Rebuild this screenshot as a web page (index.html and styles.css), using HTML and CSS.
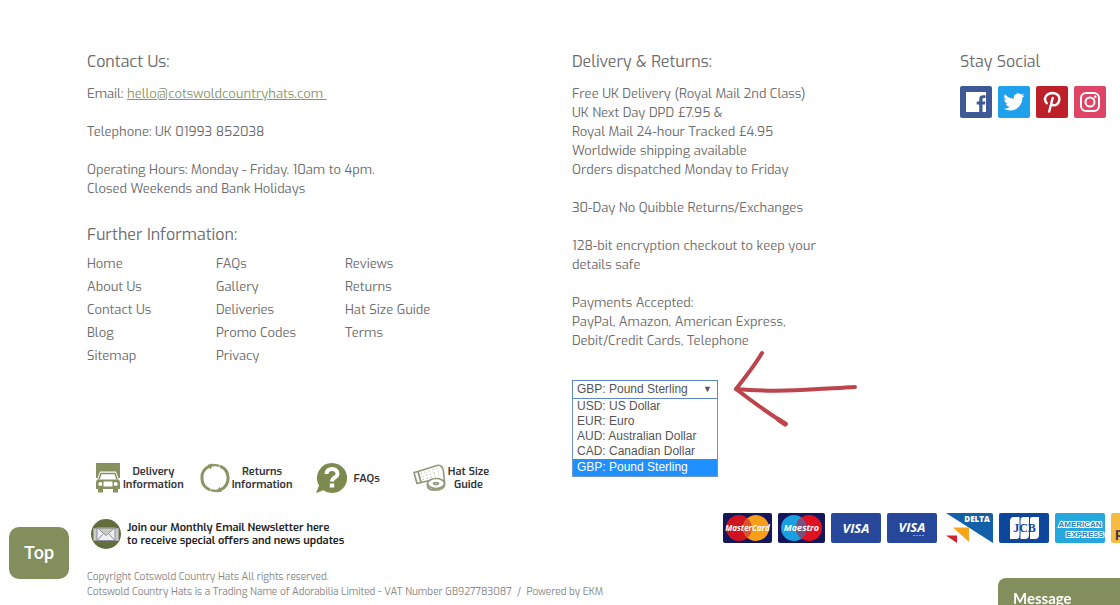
FILE: index.html
```html
<!DOCTYPE html>
<html lang="en">
<head>
<meta charset="utf-8">
<meta name="viewport" content="width=device-width, initial-scale=1">
<title>Cotswold Country Hats</title>
<link rel="stylesheet" href="styles.css">
</head>
<body>
<footer class="footer">
  <div class="columns">
    <div class="col">
      <section>
        <h2 class="heading">Contact Us:</h2>
        <p class="copy">Email: <a class="mail" href="mailto:hello@cotswoldcountryhats.com">hello@cotswoldcountryhats.com&nbsp;</a></p>
        <p class="copy">Telephone: UK 01993 852038</p>
        <p class="copy">Operating Hours: Monday - Friday. 10am to 4pm.<br>Closed Weekends and Bank Holidays</p>
      </section>
      <nav class="further" aria-labelledby="further-title">
        <h2 class="heading heading-tight" id="further-title">Further Information:</h2>
        <div class="links">
          <ul>
            <li><a href="#">Home</a></li>
            <li><a href="#">About Us</a></li>
            <li><a href="#">Contact Us</a></li>
            <li><a href="#">Blog</a></li>
            <li><a href="#">Sitemap</a></li>
          </ul>
          <ul>
            <li><a href="#">FAQs</a></li>
            <li><a href="#">Gallery</a></li>
            <li><a href="#">Deliveries</a></li>
            <li><a href="#">Promo Codes</a></li>
            <li><a href="#">Privacy</a></li>
          </ul>
          <ul>
            <li><a href="#">Reviews</a></li>
            <li><a href="#">Returns</a></li>
            <li><a href="#">Hat Size Guide</a></li>
            <li><a href="#">Terms</a></li>
          </ul>
        </div>
      </nav>
      <div class="shortcuts">
        <a class="shortcut" href="#">
          <svg width="26" height="32" viewBox="0 0 26 32" aria-hidden="true">
            <path fill="#86915f" d="M1 1h24v15h-1.500L21 9.500H5L2.500 16H1z"/>
            <path fill="none" stroke="#86915f" stroke-width="1.500" d="M3.800 17.500 6 11.500h14l2.200 6"/>
            <path fill="#86915f" d="M2 17.500h22l1 2.500v7h-2v3.500h-5V27H8v3.500H3V27H1v-7z"/>
            <circle cx="5.300" cy="22" r="2" fill="#fff"/><circle cx="20.700" cy="22" r="2" fill="#fff"/>
            <path fill="#fff" d="M8.500 19.500h9v5h-9z"/>
          </svg>
          <span>Delivery<br>Information</span>
        </a>
        <a class="shortcut" href="#">
          <svg width="30" height="32" viewBox="0 0 30 32" aria-hidden="true">
            <g fill="none" stroke="#8a9566" stroke-width="3"><path d="M9.500 4.200A12.800 12.800 0 0 0 10 27.800M20.500 27.800A12.800 12.800 0 0 0 20 4.200"/><path stroke-width="2.200" d="M10.500 4A12.800 12.800 0 0 1 19.500 4M10.500 28a12.800 12.800 0 0 0 9 0"/></g>
            <path fill="#8a9566" d="m8 2.500 5.500-1-3 6zM22 29.500l-5.500 1 3-6z"/>
          </svg>
          <span>Returns<br>Information</span>
        </a>
        <a class="shortcut shortcut-faq" href="#">
          <svg width="31" height="32" viewBox="0 0 31 32" aria-hidden="true">
            <path fill="#7c8a50" d="M16 1a15 15 0 1 1-8.500 27.300L0 31l3-7.500A15 15 0 0 1 16 1z"/>
            <path fill="none" stroke="#fff" stroke-width="4" d="M10.500 12c0-7 11.500-6.500 11 0 0 3.500-5.500 3.500-5.500 7.500"/><rect x="13.800" y="21.500" width="4.400" height="4" fill="#fff"/>
          </svg>
          <span>FAQs</span>
        </a>
        <a class="shortcut shortcut-size" href="#">
          <svg width="34" height="32" viewBox="0 0 34 32" aria-hidden="true">
            <g fill="#fff" stroke="#8d9878" stroke-width="1.600" stroke-linejoin="round">
              <path d="M6 9.500 25 3.500c4-1 6 2 6.500 6l1 11-6-4-17.500 4z"/>
              <path d="M2 10.500 6 9.500l3 11-4 1zM2 10.500 5 21.500"/>
              <ellipse cx="24" cy="21.500" rx="8.500" ry="5"/><path fill="none" d="M15.500 21.500v3c1 5 15 5 17-1v-3"/>
              <ellipse cx="24" cy="21.500" rx="2.500" ry="1"/>
            </g>
            <path fill="none" stroke="#a9b295" stroke-width="1.200" stroke-dasharray="1 3" d="m9 11.500 16-5M10.500 14.500l17-5M11 17.500l16-4.500"/>
          </svg>
          <span>Hat Size<br>Guide</span>
        </a>
      </div>
    </div>

    <div class="col">
      <h2 class="heading">Delivery &amp; Returns:</h2>
      <p class="copy">Free UK Delivery (Royal Mail 2nd Class)<br>UK Next Day DPD £7.95 &amp;<br>Royal Mail 24-hour Tracked £4.95<br>Worldwide shipping available<br>Orders dispatched Monday to Friday</p>
      <p class="copy">30-Day No Quibble Returns/Exchanges</p>
      <p class="copy">128-bit encryption checkout to keep your<br>details safe</p>
      <p class="copy">Payments Accepted:<br>PayPal, Amazon, American Express,<br>Debit/Credit Cards, Telephone</p>
      <div class="currency-row">
        <div class="currency">
          <select class="currency-select" aria-label="Currency">
            <option>USD: US Dollar</option>
            <option>EUR: Euro</option>
            <option>AUD: Australian Dollar</option>
            <option>CAD: Canadian Dollar</option>
            <option selected>GBP: Pound Sterling</option>
          </select>
          <span class="currency-caret" aria-hidden="true">▼</span>
          <ul class="currency-list" role="listbox" aria-label="Currencies">
            <li role="option">USD: US Dollar</li>
            <li role="option">EUR: Euro</li>
            <li role="option">AUD: Australian Dollar</li>
            <li role="option">CAD: Canadian Dollar</li>
            <li role="option" aria-selected="true" class="chosen">GBP: Pound Sterling</li>
          </ul>
        </div>
        <svg class="arrow" width="126" height="80" viewBox="0 0 126 80" aria-hidden="true">
          <g fill="none" stroke="#bd444d" stroke-width="4" stroke-linecap="round" stroke-linejoin="round"><path d="M123 38C85 40 48 44 4 40"/><path d="M30 4C21 19 11 31 4 40c13 10 30 23 50 35"/><path stroke-width="5" d="m47 71 6 4"/></g>
        </svg>
      </div>
    </div>

    <div class="col">
      <h2 class="heading">Stay Social</h2>
      <div class="social">
        <a href="#" aria-label="Facebook"><svg width="32" height="32" viewBox="0 0 32 32"><rect width="32" height="32" rx="2" fill="#3f5998"/><path fill="#fff" d="M6 6h20v20h-3.500v-7.500H25l.4-3h-2.900v-2c0-1 .5-1.500 1.500-1.500h1.500V9.200h-2.300c-2.700 0-4 1.500-4 4v2.300h-2.500v3h2.500V26H6z"/></svg></a>
        <a href="#" aria-label="Twitter"><svg width="32" height="32" viewBox="0 0 32 32"><rect width="32" height="32" rx="2" fill="#1fa1ee"/><path fill="#fff" transform="translate(5.500 5.500) scale(.875)" d="M23.950 4.570a10 10 0 0 1-2.820.77 4.960 4.960 0 0 0 2.160-2.720c-.95.550-2 .950-3.120 1.180a4.920 4.920 0 0 0-8.380 4.480C7.690 8.090 4.070 6.130 1.640 3.160a4.920 4.920 0 0 0 1.520 6.570 4.900 4.900 0 0 1-2.230-.61v.06a4.920 4.920 0 0 0 3.950 4.830 5 5 0 0 1-2.210.080 4.940 4.940 0 0 0 4.600 3.420A9.870 9.870 0 0 1 0 19.540a14 14 0 0 0 7.550 2.210c9.050 0 14-7.500 14-13.980l-.02-.64a9.940 9.940 0 0 0 2.420-2.560z"/></svg></a>
        <a href="#" aria-label="Pinterest"><svg width="32" height="32" viewBox="0 0 32 32"><rect width="32" height="32" rx="2" fill="#bd2029"/><path fill="none" stroke="#fff" stroke-width="2.400" stroke-linecap="round" d="M10.800 17.200C6.500 12 11 7 16.500 7c5 0 7.500 3.200 6.800 7.200-.8 4.600-5 6.500-8 4.100M16.700 12 13.200 25.500"/></svg></a>
        <a href="#" aria-label="Instagram"><svg width="32" height="32" viewBox="0 0 32 32"><rect width="32" height="32" rx="2" fill="#df4467"/><g fill="none" stroke="#fff" stroke-width="2"><rect x="7" y="7" width="18" height="18" rx="5"/><circle cx="16" cy="16" r="4.500"/></g><circle cx="21.300" cy="10.800" r="1.200" fill="#fff"/></svg></a>
      </div>
    </div>
  </div>

  <div class="bottom">
    <a class="newsletter" href="#">
      <svg width="32" height="32" viewBox="0 0 32 32" aria-hidden="true"><circle cx="16" cy="16" r="15" fill="#626f3c"/><path fill="#c9cbc5" stroke="#a2a59c" d="M3.500 10.500h25v12h-25z"/><path fill="#eeeff2" stroke="#8c8d9c" d="M7 9.500h18v13H7zM7 9.500l9 8 9-8M7 22.500l6.500-7M25 22.500l-6.500-7"/></svg>
      <span>Join our Monthly Email Newsletter here<br>to receive special offers and news updates</span>
    </a>
    <div class="payments">
      <svg width="49" height="30" viewBox="0 0 49 30" role="img" aria-label="MasterCard"><rect width="49" height="30" rx="2" fill="#15175c"/><circle cx="16" cy="15" r="13" fill="#d0141f"/><circle cx="33" cy="15" r="13" fill="#f79e1b"/><path fill="#d9542a" d="M24.500 5.200a13 13 0 0 1 0 19.600 13 13 0 0 1 0-19.600z"/><text class="card-master" x="24.500" y="18">MasterCard</text></svg>
      <svg width="47" height="30" viewBox="0 0 47 30" role="img" aria-label="Maestro"><rect width="47" height="30" rx="2" fill="#15175c"/><circle cx="16" cy="15" r="13" fill="#1a9fe0"/><circle cx="31" cy="15" r="13" fill="#e01222"/><path fill="#795181" d="M23.500 4.400a13 13 0 0 1 0 21.200 13 13 0 0 1 0-21.200z"/><text class="card-maestro" x="23.500" y="18">Maestro</text></svg>
      <svg width="50" height="30" viewBox="0 0 50 30" role="img" aria-label="Visa"><rect width="50" height="30" rx="2" fill="#26479a"/><text class="card-visa" x="25" y="20">VISA</text></svg>
      <svg width="50" height="30" viewBox="0 0 50 30" role="img" aria-label="Visa Debit"><rect width="50" height="30" rx="2" fill="#26479a"/><text class="card-visa" x="25" y="19">VISA</text><path stroke="#8fa2d4" stroke-dasharray="2 1" d="M26 22.500h12"/></svg>
      <svg width="50" height="30" viewBox="0 0 50 30" role="img" aria-label="Delta"><path fill="#1260a8" d="M3 0h45q2 0 2 2v28z"/><path fill="#f9a51a" d="M10 14.500h16V29z"/><path fill="#d7202d" d="M3 22.500h11V30z"/><text class="card-delta" x="34" y="9">DELTA</text></svg>
      <svg width="50" height="30" viewBox="0 0 50 30" role="img" aria-label="JCB"><rect width="50" height="30" rx="2" fill="#0d479b"/><path fill="#fff" d="M15 4h6v18q0 4-4 4h-6V8q0-4 4-4zM25 4h5v18q0 4-4 4h-5V8q0-4 4-4zM34 4h6v18q0 4-4 4h-6V8q0-4 4-4z"/><path stroke="#0d479b" d="M21 4v22M30.500 4v22"/><text class="card-jcb" x="25.500" y="19">JCB</text></svg>
      <svg width="50" height="30" viewBox="0 0 50 30" role="img" aria-label="American Express"><rect width="50" height="30" rx="2" fill="#25a8dc"/><g class="card-amex"><text x="25" y="14">AMERICAN</text><text x="30" y="24">EXPRESS</text></g></svg>
      <svg width="50" height="30" viewBox="0 0 50 30" role="img" aria-label="PayPal"><rect width="50" height="30" rx="2" fill="#f6bb42"/><text x="4" y="24" class="card-paypal">p</text></svg>
    </div>
  </div>

  <p class="legal">Copyright Cotswold Country Hats All rights reserved.<br>Cotswold Country Hats is a Trading Name of Adorabilia Limited - VAT Number GB927783087 &nbsp;/&nbsp; <a href="#">Powered by EKM</a></p>
</footer>
<button class="top-button" type="button">Top</button>
<button class="message-button" type="button">Message</button>
</body>
</html>
```

FILE: styles.css
```css
* { box-sizing: border-box; }
body {
  margin: 0;
  background: #fff;
  color: #6c6c6c;
  font: 13px/19px Exo, "Exo 2", Roboto, sans-serif;
  overflow: hidden;
}
h2, p, ul { margin: 0; padding: 0; }
ul { list-style: none; }
a { color: inherit; text-decoration: none; }
svg { display: block; flex: none; }

.footer { padding: 50px 0 0 87px; }
.columns { display: grid; grid-template-columns: 485fr 388fr 160fr; }
.heading { margin-bottom: 10px; font-size: 16px; line-height: 24px; font-weight: 400; }
.heading-tight { margin-bottom: 5px; }
.copy + .copy { margin-top: 19px; }
.mail { color: #899768; text-decoration: underline; }

.further { margin-top: 25px; }
.links { display: grid; grid-template-columns: repeat(3, 129px); line-height: 23px; }

.shortcuts { display: flex; align-items: center; margin-top: 95px; padding-left: 8px; gap: 16px; }
.shortcut { display: flex; align-items: center; gap: 2px; color: #333; font-size: 11px; line-height: 13px; font-weight: 600; text-align: center; }
.shortcut-faq { gap: 6px; margin-left: 8px; }
.shortcut-size { margin-left: 16px; }

.currency-row { display: flex; align-items: flex-start; margin-top: 30px; height: 20px; }
.currency { position: relative; width: 146px; font: 12px/15px "Liberation Sans", Arial, sans-serif; color: #555; }
.currency-select {
  display: block;
  width: 100%;
  height: 19px;
  padding: 0 4px;
  appearance: none;
  border: 1px solid #5b86c9;
  border-radius: 0;
  background: #fff;
  color: inherit;
  font: inherit;
}
.currency-caret { position: absolute; top: 2px; right: 6px; font-size: 9px; pointer-events: none; }
.currency-list { position: absolute; top: 100%; left: 0; right: 0; border: 1px solid #6f95cf; border-top: 0; background: #fff; }
.currency-list li { padding: 0 4px; line-height: 15px; }
.currency-list .chosen { background: #1e90ff; color: #fff; line-height: 17px; }
.arrow { margin: -31px 0 0 14px; }

.social { display: flex; gap: 6px; margin-top: 12px; }

.bottom { display: grid; grid-template-columns: 636fr 397fr; align-items: start; margin-top: 19px; }
.newsletter { display: flex; align-items: center; gap: 5px; margin-top: 5px; padding-left: 3px; color: #222; font-size: 11px; line-height: 13px; font-weight: 600; }
.payments { display: flex; gap: 6px; overflow: hidden; }
.card-master, .card-maestro, .card-visa { fill: #fff; font-family: "Open Sans", sans-serif; font-weight: 700; font-style: italic; text-anchor: middle; }
.card-master { font-size: 8px; }
.card-maestro { font-size: 9px; }
.card-visa { font-size: 13px; }
.card-delta, .card-jcb { font: 800 8px "Open Sans", sans-serif; fill: #fff; text-anchor: middle; }
.card-jcb { font: 700 12px "Liberation Serif", serif; fill: #0d479b; }
.card-amex { font: 700 8px "Liberation Sans", sans-serif; fill: #1b86bd; stroke: #fff; stroke-width: 2px; paint-order: stroke; text-anchor: middle; }
.card-paypal { font: 700 12px "Open Sans", sans-serif; fill: #26324f; }

.legal { margin-top: 19px; color: #858585; font-size: 10px; line-height: 15px; }

.top-button, .message-button { position: fixed; border: 0; background: #838e5d; color: #fff; }
.top-button { left: 9px; bottom: 26px; width: 60px; height: 52px; border-radius: 10px; font: 500 18px/24px Roboto, sans-serif; }
.message-button { right: 0; bottom: 0; width: 122px; height: 27px; padding: 10px 15px 0; border-radius: 8px 0 0 0; font: 700 15px/20px Lato, sans-serif; text-align: left; }
```
